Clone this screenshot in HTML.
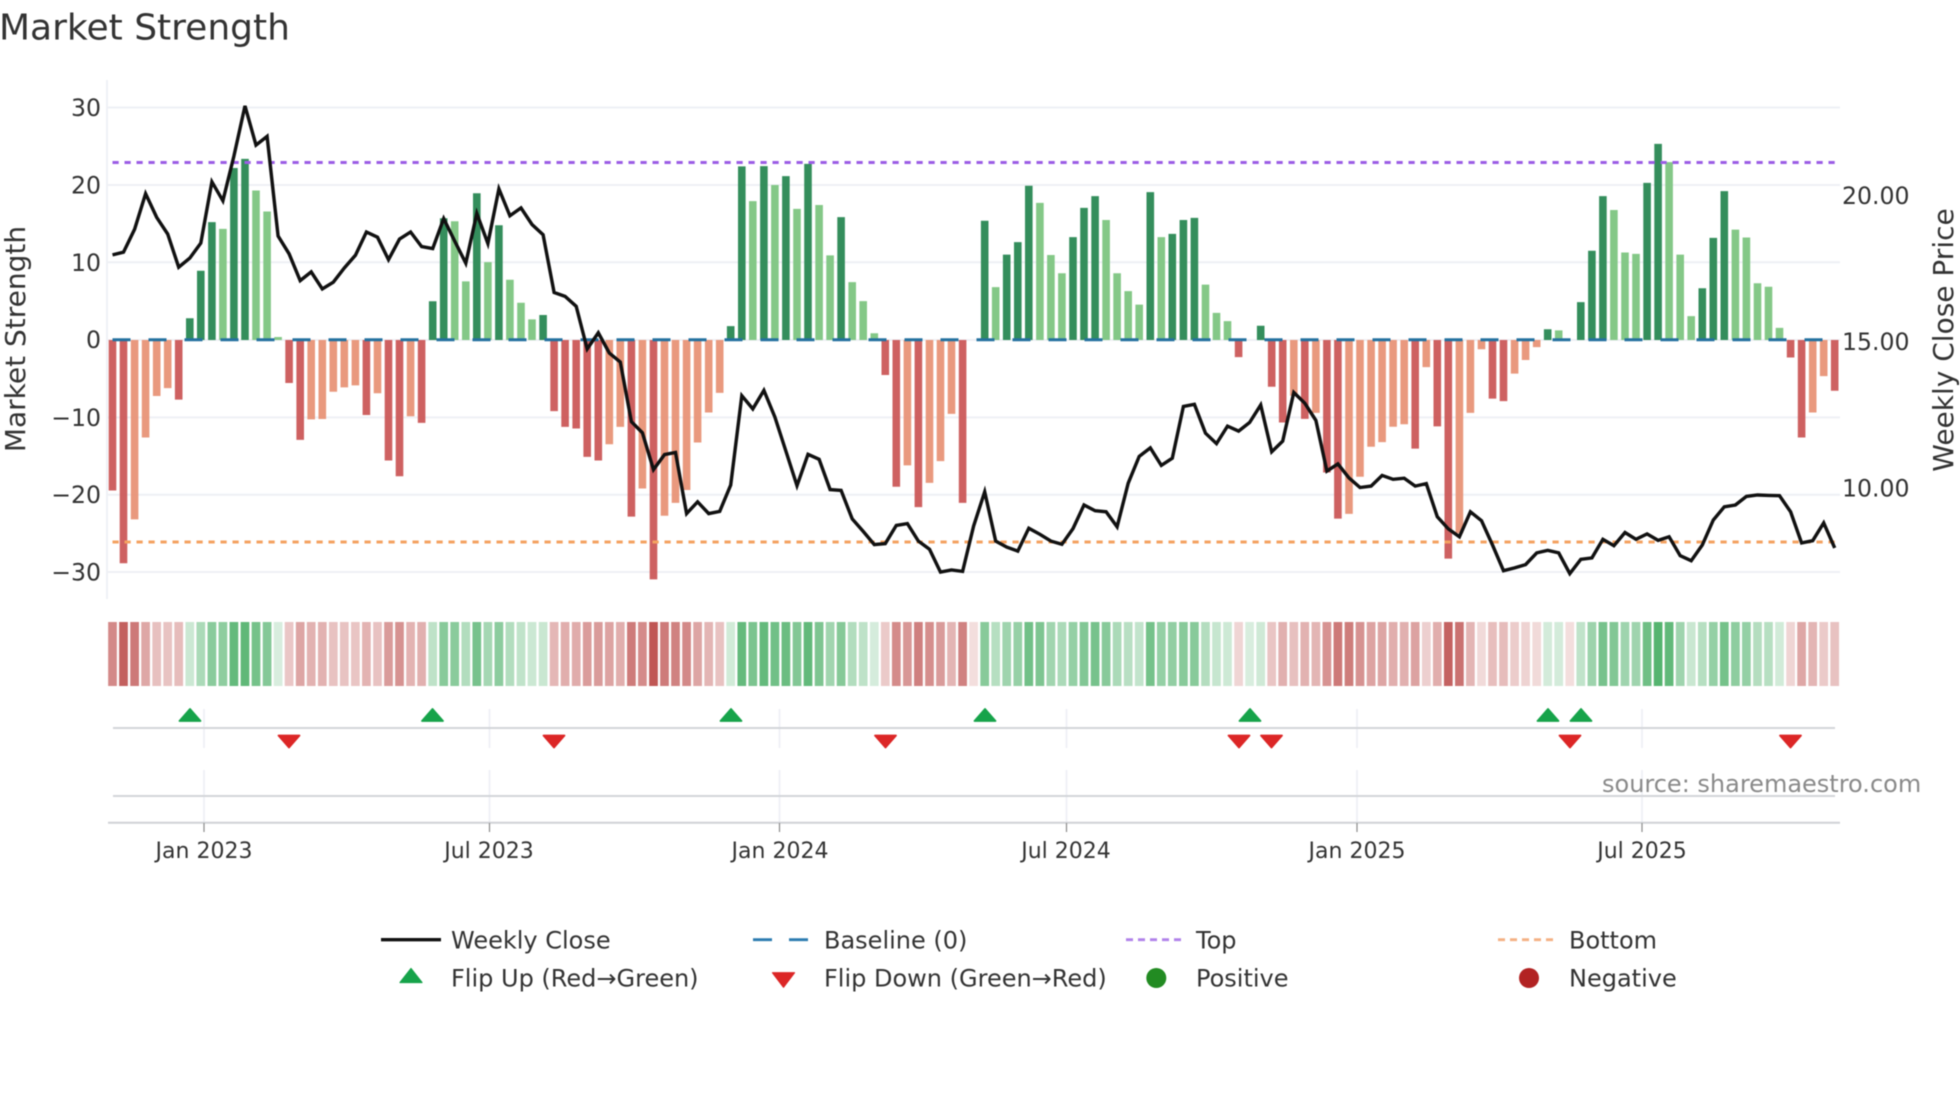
<!DOCTYPE html>
<html lang="en">
<head>
<meta charset="utf-8">
<title>Market Strength</title>
<style>
html,body{margin:0;padding:0;background:#fff;width:1960px;height:1102px;overflow:hidden}
svg{display:block;filter:blur(.4px)}
text{font-family:"DejaVu Sans","Liberation Sans",sans-serif;fill:#333}
#s rect{y:622px;height:64px;width:8.7px}
</style>
</head>
<body>
<svg width="1960" height="1102" viewBox="0 0 1960 1102" xmlns="http://www.w3.org/2000/svg">
<rect width="1960" height="1102" fill="#fff"/>
<text x="-1" y="39.5" font-size="36">Market Strength</text>

<!-- grid -->
<path d="M107 80V599" stroke="#eceef3" stroke-width="1.6" fill="none"/>
<path d="M108 107.5H1840M108 185H1840M108 262.3H1840M108 417.4H1840M108 494.8H1840M108 572H1840M108 340H1840" stroke="#eef0f5" stroke-width="2" fill="none"/>

<!-- y labels -->
<g font-size="23.6" text-anchor="end">
<text x="101" y="116">30</text>
<text x="101" y="193.5">20</text>
<text x="101" y="270.8">10</text>
<text x="101" y="348.2">0</text>
<text x="101" y="425.8">−10</text>
<text x="101" y="503.2">−20</text>
<text x="101" y="580.5">−30</text>
</g>
<g font-size="23.6">
<text x="1842" y="204">20.00</text>
<text x="1842" y="350">15.00</text>
<text x="1842" y="496.5">10.00</text>
</g>
<text transform="translate(25 339) rotate(-90)" font-size="28" text-anchor="middle">Market Strength</text>
<text transform="translate(1953 340) rotate(-90)" font-size="28" text-anchor="middle">Weekly Close Price</text>

<!-- bars -->
<g fill="none" stroke-width="7.6" opacity=".97">
<path stroke="#cd5c5c" d="M112.5 340V490.5M123.5 340V563.2M178.7 340V399.6M289.1 340V383M300.2 340V439.9M366.4 340V415M388.5 340V460.5M399.5 340V476.3M421.6 340V422.9M554.1 340V411.1M565.1 340V426.9M576.2 340V428.5M587.2 340V456.9M598.3 340V460.5M631.4 340V516.6M653.5 340V579.4M885.3 340V375M896.3 340V486.8M918.4 340V507.1M962.6 340V502.9M1238.6 340V357.1M1271.7 340V386.8M1282.7 340V422.5M1304.8 340V418.9M1326.9 340V472.5M1337.9 340V518.6M1415.2 340V448.6M1437.3 340V426.4M1448.3 340V558.6M1492.5 340V398.6M1503.5 340V401.1M1790.6 340V357.5M1801.6 340V437.5M1834.7 340V390.7"/>
<path stroke="#e9967a" d="M134.6 340V519.4M145.6 340V437.5M156.7 340V396M167.7 340V388.1M311.2 340V419.4M322.3 340V419M333.3 340V391.7M344.3 340V387.4M355.4 340V385.4M377.5 340V393.3M410.6 340V416.2M609.3 340V444.3M620.3 340V426.9M642.4 340V488.5M664.5 340V515.7M675.5 340V502.9M686.6 340V490M697.6 340V442.5M708.7 340V412.5M719.7 340V392.9M907.4 340V465.4M929.5 340V482.9M940.5 340V461.1M951.5 340V413.9M1293.8 340V395.7M1315.9 340V412.9M1349 340V513.9M1360 340V476.8M1371.1 340V446.8M1382.1 340V442.1M1393.1 340V426.8M1404.2 340V424.3M1426.3 340V367.1M1459.4 340V533.2M1470.4 340V412.9M1481.5 340V349.3M1514.6 340V373.6M1525.6 340V360M1536.7 340V347.1M1812.7 340V412.5M1823.7 340V376.1"/>
<path stroke="#2e8b57" d="M189.8 340V318.2M200.8 340V270.8M211.9 340V222.1M233.9 340V168M245 340V158.9M432.7 340V301.2M443.7 340V218.2M476.8 340V193.3M498.9 340V225.3M543.1 340V315M730.7 340V326.1M741.8 340V166.4M763.9 340V166.1M785.9 340V176.1M808 340V163.9M841.1 340V217.1M984.7 340V220.7M1006.7 340V254.6M1017.8 340V242.1M1028.8 340V185.7M1073 340V237.1M1084 340V207.9M1095.1 340V196.1M1150.3 340V192.1M1172.3 340V233.9M1183.4 340V220M1194.4 340V217.9M1260.7 340V325.7M1547.7 340V329.3M1580.8 340V302.1M1591.9 340V250.7M1602.9 340V196.1M1647.1 340V182.9M1658.1 340V143.9M1702.3 340V288.2M1713.3 340V237.9M1724.3 340V191.1"/>
<path stroke="#81c784" d="M222.9 340V228.9M256 340V190.5M267.1 340V211.5M278.1 340V337M454.7 340V221.3M465.8 340V281.4M487.9 340V262.1M509.9 340V279.8M521 340V302.8M532 340V319.4M752.8 340V201.1M774.9 340V185M797 340V208.9M819.1 340V205M830.1 340V255.4M852.2 340V282.1M863.2 340V301.1M874.3 340V333.2M995.7 340V287.1M1039.9 340V202.9M1050.9 340V255M1061.9 340V273.2M1106.1 340V220M1117.1 340V273.2M1128.2 340V291.1M1139.2 340V304.6M1161.3 340V237.1M1205.5 340V284.6M1216.5 340V312.9M1227.5 340V321.1M1558.7 340V330.4M1613.9 340V210M1625 340V252.5M1636 340V253.9M1669.1 340V162.1M1680.2 340V254.6M1691.2 340V316.1M1735.4 340V229.6M1746.4 340V237.5M1757.5 340V283.2M1768.5 340V286.8M1779.5 340V327.9"/>
</g>

<!-- reference lines -->
<path d="M112.5 339.7H1834.7" stroke="#24719f" stroke-width="3" stroke-dasharray="18 18" fill="none"/>
<path d="M112.5 162.5H1834.7" stroke="#9b5de5" stroke-width="3" stroke-dasharray="6.2 5.8" fill="none"/>
<path d="M112.5 542H1834.7" stroke="#f4a261" stroke-width="3" stroke-dasharray="6.2 5.8" fill="none"/>

<!-- weekly close -->
<path fill="none" stroke="#111" stroke-width="3.4" stroke-linejoin="miter" stroke-miterlimit="4" d="M112.5 254.9L123.5 252.2L134.6 229.2L145.6 193.7L156.7 217.4L167.7 234L178.7 267.2L189.8 258.1L200.8 243.1L211.9 181.8L222.9 200.8L233.9 156.1L245 105.9L256 145.1L267.1 136.4L278.1 236L289.1 253.8L300.2 280.6L311.2 271.9L322.3 288.9L333.3 282.2L344.3 268L355.4 255.3L366.4 232L377.5 237.2L388.5 259.7L399.5 239.1L410.6 232L421.6 246.6L432.7 248.6L443.7 218.6L454.7 241.1L465.8 263.2L476.8 213.4L487.9 243.5L498.9 188.9L509.9 215.8L521 207.9L532 224.5L543.1 234.8L554.1 292.5L565.1 296.4L576.2 306.3L587.2 349L598.3 332.8L609.3 353L620.3 362.1L631.4 421.7L642.4 432.8L653.5 469.6L664.5 454.6L675.5 452.5L686.6 513.6L697.6 501.8L708.7 513.6L719.7 511.4L730.7 485L741.8 395.7L752.8 408.9L763.9 390.4L774.9 417.1L785.9 451.1L797 485.7L808 454.3L819.1 459.3L830.1 489.6L841.1 490.4L852.2 518.9L863.2 531.4L874.3 544.6L885.3 543.6L896.3 525.4L907.4 523.6L918.4 541.1L929.5 549.3L940.5 572.1L951.5 570L962.6 571.4L973.6 526.1L984.7 491.8L995.7 541.1L1006.7 547.1L1017.8 551.1L1028.8 528.2L1039.9 534.3L1050.9 541.1L1061.9 544.3L1073 528.6L1084 505L1095.1 510.7L1106.1 511.8L1117.1 526.8L1128.2 483.2L1139.2 456.4L1150.3 447.9L1161.3 465.4L1172.3 458.2L1183.4 406.4L1194.4 404.3L1205.5 433.2L1216.5 443.6L1227.5 426.1L1238.6 431.1L1249.6 422.5L1260.7 405L1271.7 451.8L1282.7 441.1L1293.8 392.5L1304.8 403.2L1315.9 420.4L1326.9 471.1L1337.9 463.9L1349 477.9L1360 487.5L1371.1 486.1L1382.1 475.4L1393.1 479.3L1404.2 478.2L1415.2 486.1L1426.3 483.6L1437.3 516.8L1448.3 528.9L1459.4 536.8L1470.4 511.8L1481.5 520.7L1492.5 545L1503.5 570.7L1514.6 567.9L1525.6 564.6L1536.7 552.9L1547.7 550.4L1558.7 552.9L1569.8 573.6L1580.8 559.3L1591.9 557.9L1602.9 539.3L1613.9 545.7L1625 532.5L1636 539.3L1647.1 533.9L1658.1 540.4L1669.1 536.8L1680.2 555.7L1691.2 560.7L1702.3 545L1713.3 520L1724.3 506.8L1735.4 505L1746.4 496.4L1757.5 495L1768.5 495.4L1779.5 495.7L1790.6 511.8L1801.6 542.9L1812.7 540.7L1823.7 522.9L1834.7 547.9"/>

<!-- heat strip -->
<g id="s" transform="translate(-4.35 0)">
<g fill="#bd4f4d">
<rect x="112.5" fill-opacity=".67"/><rect x="123.5" fill-opacity=".9"/><rect x="134.6" fill-opacity=".76"/><rect x="145.6" fill-opacity=".5"/><rect x="156.7" fill-opacity=".36"/><rect x="167.7" fill-opacity=".34"/><rect x="178.7" fill-opacity=".38"/>
<rect x="289.1" fill-opacity=".32"/><rect x="300.2" fill-opacity=".51"/><rect x="311.2" fill-opacity=".44"/><rect x="322.3" fill-opacity=".44"/><rect x="333.3" fill-opacity=".35"/><rect x="344.3" fill-opacity=".34"/><rect x="355.4" fill-opacity=".33"/><rect x="366.4" fill-opacity=".43"/><rect x="377.5" fill-opacity=".35"/><rect x="388.5" fill-opacity=".57"/><rect x="399.5" fill-opacity=".62"/><rect x="410.6" fill-opacity=".43"/><rect x="421.6" fill-opacity=".45"/>
<rect x="554.1" fill-opacity=".41"/><rect x="565.1" fill-opacity=".46"/><rect x="576.2" fill-opacity=".47"/><rect x="587.2" fill-opacity=".56"/><rect x="598.3" fill-opacity=".57"/><rect x="609.3" fill-opacity=".52"/><rect x="620.3" fill-opacity=".46"/><rect x="631.4" fill-opacity=".75"/><rect x="642.4" fill-opacity=".66"/><rect x="653.5" fill-opacity=".96"/><rect x="664.5" fill-opacity=".75"/><rect x="675.5" fill-opacity=".71"/><rect x="686.6" fill-opacity=".67"/><rect x="697.6" fill-opacity=".51"/><rect x="708.7" fill-opacity=".42"/><rect x="719.7" fill-opacity=".35"/>
<rect x="885.3" fill-opacity=".3"/><rect x="896.3" fill-opacity=".66"/><rect x="907.4" fill-opacity=".59"/><rect x="918.4" fill-opacity=".72"/><rect x="929.5" fill-opacity=".64"/><rect x="940.5" fill-opacity=".57"/><rect x="951.5" fill-opacity=".42"/><rect x="962.6" fill-opacity=".71"/><rect x="973.6" fill-opacity=".19"/>
<rect x="1238.6" fill-opacity=".24"/>
<rect x="1271.7" fill-opacity=".33"/><rect x="1282.7" fill-opacity=".45"/><rect x="1293.8" fill-opacity=".36"/><rect x="1304.8" fill-opacity=".44"/><rect x="1315.9" fill-opacity=".42"/><rect x="1326.9" fill-opacity=".61"/><rect x="1337.9" fill-opacity=".76"/><rect x="1349" fill-opacity=".74"/><rect x="1360" fill-opacity=".62"/><rect x="1371.1" fill-opacity=".52"/><rect x="1382.1" fill-opacity=".51"/><rect x="1393.1" fill-opacity=".46"/><rect x="1404.2" fill-opacity=".45"/><rect x="1415.2" fill-opacity=".53"/><rect x="1426.3" fill-opacity=".27"/><rect x="1437.3" fill-opacity=".46"/><rect x="1448.3" fill-opacity=".89"/><rect x="1459.4" fill-opacity=".8"/><rect x="1470.4" fill-opacity=".42"/><rect x="1481.5" fill-opacity=".21"/><rect x="1492.5" fill-opacity=".37"/><rect x="1503.5" fill-opacity=".38"/><rect x="1514.6" fill-opacity=".29"/><rect x="1525.6" fill-opacity=".25"/><rect x="1536.7" fill-opacity=".21"/>
<rect x="1569.8" fill-opacity=".19"/>
<rect x="1790.6" fill-opacity=".24"/><rect x="1801.6" fill-opacity=".5"/><rect x="1812.7" fill-opacity=".42"/><rect x="1823.7" fill-opacity=".3"/><rect x="1834.7" fill-opacity=".35"/>
</g>
<g fill="#2ea24e">
<rect x="189.8" fill-opacity=".25"/><rect x="200.8" fill-opacity=".4"/><rect x="211.9" fill-opacity=".56"/><rect x="222.9" fill-opacity=".54"/><rect x="233.9" fill-opacity=".74"/><rect x="245" fill-opacity=".76"/><rect x="256" fill-opacity=".66"/><rect x="267.1" fill-opacity=".59"/><rect x="278.1" fill-opacity=".19"/>
<rect x="432.7" fill-opacity=".31"/><rect x="443.7" fill-opacity=".57"/><rect x="454.7" fill-opacity=".56"/><rect x="465.8" fill-opacity=".37"/><rect x="476.8" fill-opacity=".65"/><rect x="487.9" fill-opacity=".43"/><rect x="498.9" fill-opacity=".55"/><rect x="509.9" fill-opacity=".37"/><rect x="521" fill-opacity=".3"/><rect x="532" fill-opacity=".25"/><rect x="543.1" fill-opacity=".26"/>
<rect x="730.7" fill-opacity=".22"/><rect x="741.8" fill-opacity=".74"/><rect x="752.8" fill-opacity=".63"/><rect x="763.9" fill-opacity=".74"/><rect x="774.9" fill-opacity=".68"/><rect x="785.9" fill-opacity=".71"/><rect x="797" fill-opacity=".6"/><rect x="808" fill-opacity=".75"/><rect x="819.1" fill-opacity=".62"/><rect x="830.1" fill-opacity=".45"/><rect x="841.1" fill-opacity=".58"/><rect x="852.2" fill-opacity=".37"/><rect x="863.2" fill-opacity=".31"/><rect x="874.3" fill-opacity=".2"/>
<rect x="984.7" fill-opacity=".57"/><rect x="995.7" fill-opacity=".35"/><rect x="1006.7" fill-opacity=".46"/><rect x="1017.8" fill-opacity=".5"/><rect x="1028.8" fill-opacity=".68"/><rect x="1039.9" fill-opacity=".62"/><rect x="1050.9" fill-opacity=".45"/><rect x="1061.9" fill-opacity=".4"/><rect x="1073" fill-opacity=".51"/><rect x="1084" fill-opacity=".6"/><rect x="1095.1" fill-opacity=".65"/><rect x="1106.1" fill-opacity=".57"/><rect x="1117.1" fill-opacity=".4"/><rect x="1128.2" fill-opacity=".34"/><rect x="1139.2" fill-opacity=".29"/><rect x="1150.3" fill-opacity=".66"/><rect x="1161.3" fill-opacity=".51"/><rect x="1172.3" fill-opacity=".52"/><rect x="1183.4" fill-opacity=".57"/><rect x="1194.4" fill-opacity=".57"/><rect x="1205.5" fill-opacity=".36"/><rect x="1216.5" fill-opacity=".27"/><rect x="1227.5" fill-opacity=".24"/>
<rect x="1249.6" fill-opacity=".19"/><rect x="1260.7" fill-opacity=".23"/>
<rect x="1547.7" fill-opacity=".21"/><rect x="1558.7" fill-opacity=".21"/>
<rect x="1580.8" fill-opacity=".3"/><rect x="1591.9" fill-opacity=".47"/><rect x="1602.9" fill-opacity=".65"/><rect x="1613.9" fill-opacity=".6"/><rect x="1625" fill-opacity=".46"/><rect x="1636" fill-opacity=".46"/><rect x="1647.1" fill-opacity=".69"/><rect x="1658.1" fill-opacity=".81"/><rect x="1669.1" fill-opacity=".75"/><rect x="1680.2" fill-opacity=".46"/><rect x="1691.2" fill-opacity=".26"/><rect x="1702.3" fill-opacity=".35"/><rect x="1713.3" fill-opacity=".51"/><rect x="1724.3" fill-opacity=".66"/><rect x="1735.4" fill-opacity=".54"/><rect x="1746.4" fill-opacity=".51"/><rect x="1757.5" fill-opacity=".36"/><rect x="1768.5" fill-opacity=".35"/><rect x="1779.5" fill-opacity=".22"/>
</g>
</g>

<!-- lower panel grid -->
<path d="M204 709V748M489.5 709V748M779.5 709V748M1066.5 709V748M1357 709V748M1642 709V748M204 770V822M489.5 770V822M779.5 770V822M1066.5 770V822M1357 770V822M1642 770V822" stroke="#eceef4" stroke-width="1.5" fill="none"/>
<path d="M113 728H1835M113 796H1835" stroke="#d3d5d9" stroke-width="2" fill="none"/>
<path d="M108 822.8H1840" stroke="#d0d2d6" stroke-width="2" fill="none"/>
<path d="M204 823V832M489.5 823V832M779.5 823V832M1066.5 823V832M1357 823V832M1642 823V832" stroke="#8a8a8a" stroke-width="1.2" fill="none"/>

<!-- markers -->
<path d="M179.5 721h21l-10.5-12zM422 721h21l-10.5-12zM720.5 721h21l-10.5-12zM974.5 721h21l-10.5-12zM1239.5 721h21l-10.5-12zM1537.5 721h21l-10.5-12zM1570.5 721h21l-10.5-12z" fill="#16a34a" stroke="#16a34a" stroke-width="1.8" stroke-linejoin="round"/>
<path d="M278.5 735.5h21l-10.5 12zM543.5 735.5h21l-10.5 12zM875 735.5h21l-10.5 12zM1228.5 735.5h21l-10.5 12zM1261 735.5h21l-10.5 12zM1559.5 735.5h21l-10.5 12zM1780 735.5h21l-10.5 12z" fill="#dc2626" stroke="#dc2626" stroke-width="1.8" stroke-linejoin="round"/>

<!-- x labels -->
<g font-size="22" text-anchor="middle">
<text x="204" y="858">Jan 2023</text>
<text x="489" y="858">Jul 2023</text>
<text x="780" y="858">Jan 2024</text>
<text x="1066" y="858">Jul 2024</text>
<text x="1357" y="858">Jan 2025</text>
<text x="1642" y="858">Jul 2025</text>
</g>

<text x="1602" y="792" font-size="24" style="fill:#8a8a8a">source: sharemaestro.com</text>

<!-- legend -->
<path d="M381 939.7H441" stroke="#111" stroke-width="3.4" fill="none"/>
<path d="M753 939.7h19M789 939.7h19" stroke="#2b7bb0" stroke-width="2.8" fill="none"/>
<path d="M1126 939.7H1182" stroke="#b182ea" stroke-width="2.8" stroke-dasharray="7 5" fill="none"/>
<path d="M1498 939.7H1554" stroke="#f4b183" stroke-width="2.8" stroke-dasharray="7 5" fill="none"/>
<path d="M400 982.5h22l-11-14z" fill="#16a34a" stroke="#16a34a" stroke-width="1.2" stroke-linejoin="round"/>
<path d="M772.5 972.7h22l-11 14.5z" fill="#dc2626" stroke="#dc2626" stroke-width="1.2" stroke-linejoin="round"/>
<circle cx="1156.3" cy="978" r="10" fill="#228b22"/>
<circle cx="1529" cy="978" r="10" fill="#b22222"/>
<g font-size="24">
<text x="451" y="948.3">Weekly Close</text>
<text x="824" y="948.3">Baseline (0)</text>
<text x="1196" y="948.3">Top</text>
<text x="1569" y="948.3">Bottom</text>
<text x="451" y="986.5">Flip Up (Red→Green)</text>
<text x="824" y="986.5">Flip Down (Green→Red)</text>
<text x="1196" y="986.5">Positive</text>
<text x="1569" y="986.5">Negative</text>
</g>
</svg>
</body>
</html>
